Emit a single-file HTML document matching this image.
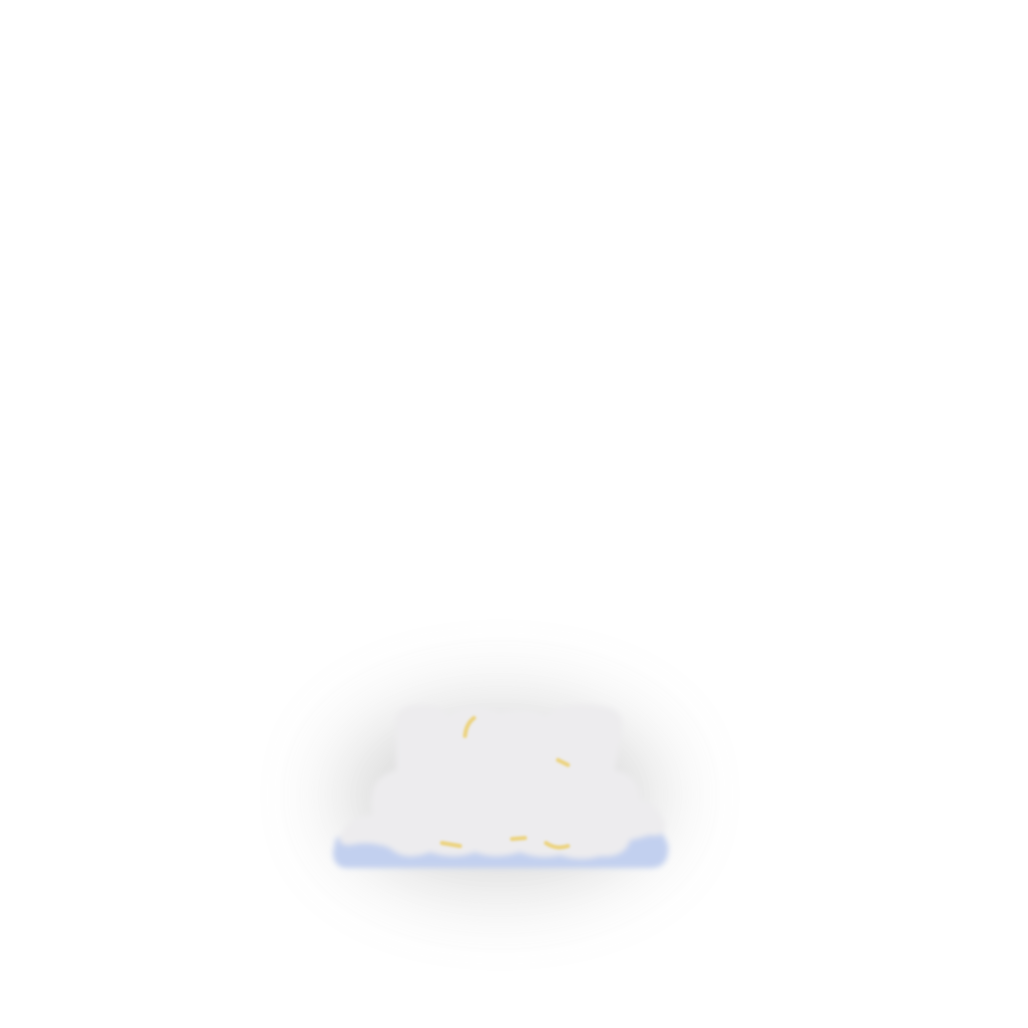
<!DOCTYPE html>
<html><head><style>html,body{margin:0;padding:0;background:#fff;width:1028px;height:1028px;overflow:hidden}</style></head>
<body>
<svg width="1028" height="1028" viewBox="0 0 1028 1028" xmlns="http://www.w3.org/2000/svg">
<defs>
<filter id="sh" x="-100%" y="-100%" width="300%" height="300%"><feGaussianBlur stdDeviation="42"/></filter>
<filter id="b3"><feGaussianBlur stdDeviation="3"/></filter>
<filter id="b1"><feGaussianBlur stdDeviation="1.2"/></filter>
</defs>
<ellipse cx="500" cy="795" rx="160" ry="90" fill="#a0a0a0" opacity="0.42" filter="url(#sh)"/>
<g filter="url(#b3)">
<path d="M336 838 Q360 830 380 838 L630 815 Q655 812 668 845 Q670 868 650 868 L345 868 Q333 866 333 852 Z" fill="#c2d0ef"/>
<path d="M340 838 Q345 818 372 815 Q368 790 380 778 Q392 770 396 770 L396 720 Q398 705 420 705 Q440 705 448 715 Q470 700 500 712 Q530 705 545 715 Q570 700 600 706 Q625 708 622 730 L615 770 Q640 775 640 800 Q660 805 665 825 Q665 838 650 835 Q640 838 630 840 Q625 858 600 856 Q580 862 560 855 Q540 860 520 852 Q495 860 475 852 Q455 860 430 852 Q405 862 390 848 Q370 840 350 845 Q338 845 340 838 Z" fill="#edecee"/>
</g>
<g filter="url(#b1)" stroke="#ecd27a" stroke-width="4" fill="none" stroke-linecap="round">
<path d="M465 736 Q466 724 474 718"/>
<path d="M558 760 L568 765"/>
<path d="M442 843 L460 846"/>
<path d="M512 839 L525 838"/>
<path d="M546 843 Q556 850 568 846"/>
</g>
</svg>
</body></html>
